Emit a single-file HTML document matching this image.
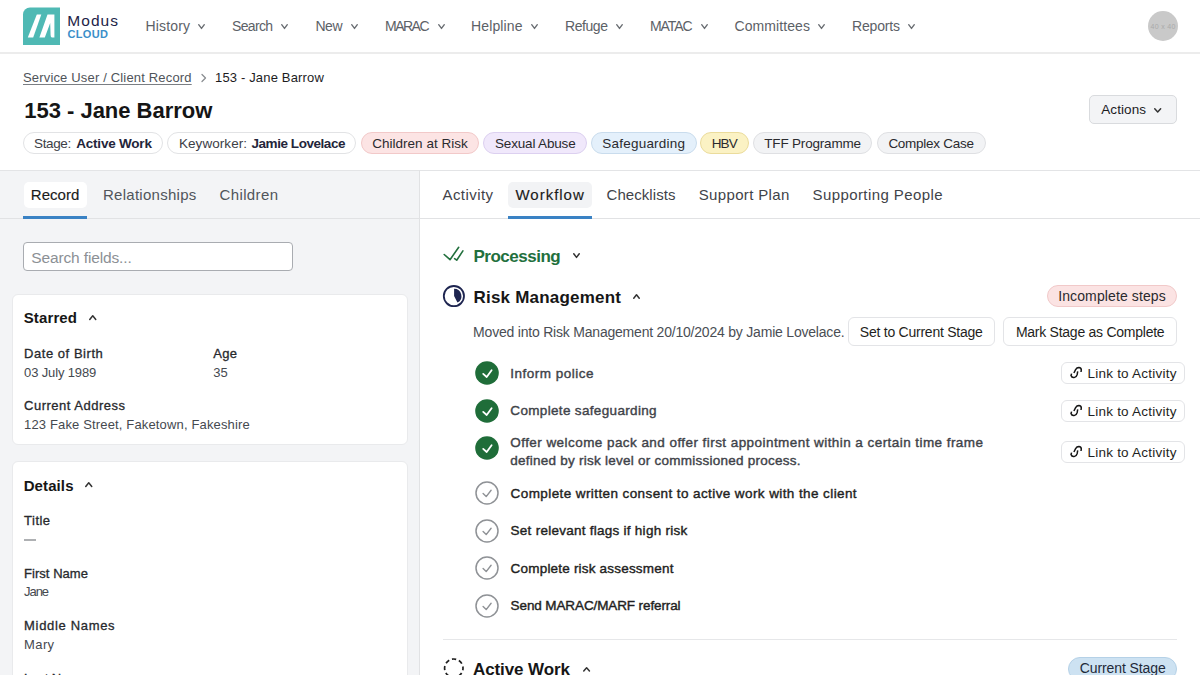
<!DOCTYPE html>
<html><head><meta charset="utf-8"><style>
html,body{margin:0;padding:0;width:1200px;height:675px;overflow:hidden;background:#fff;font-family:"Liberation Sans", sans-serif;}
#root{position:relative;width:1200px;height:675px;overflow:hidden;}
</style></head><body><div id="root">
<div style="position:absolute;left:0px;top:52px;width:1200px;height:1.5px;box-sizing:border-box;background:#ececec"></div>
<svg style="position:absolute;left:0;top:0" width="70" height="50">
<path d="M30 7.5 H60 V45 H23 V14.5 A7 7 0 0 1 30 7.5 Z" fill="#4fb9b4"/>
<path d="M36.8 14.6 H41.3 L33.2 37.5 H27.8 Z" fill="#fff"/>
<path d="M47.5 14.6 H54.4 V37.5 H51.8 Q50.6 37.2 50.6 35 L50.2 23 L44.8 37.5 H39.4 Z" fill="#fff"/>
</svg>
<div style="position:absolute;left:1148px;top:11px;width:30px;height:30px;box-sizing:border-box;background:#c9c9c9;border-radius:50%"></div>
<div style="position:absolute;left:1089.2px;top:94.6px;width:88px;height:29.8px;box-sizing:border-box;background:#f3f4f6;border:1px solid #d9dbde;border-radius:5px"></div>
<div style="position:absolute;left:22.75px;top:132.4px;width:139.75px;height:22px;box-sizing:border-box;background:#fff;border:1px solid #e2e3e5;border-radius:11px"></div>
<div style="position:absolute;left:167.4px;top:132.4px;width:188.99999999999997px;height:22px;box-sizing:border-box;background:#fff;border:1px solid #e2e3e5;border-radius:11px"></div>
<div style="position:absolute;left:361px;top:132.4px;width:118px;height:22px;box-sizing:border-box;background:#fce4e4;border:1px solid #f2c9c9;border-radius:11px"></div>
<div style="position:absolute;left:483.3px;top:132.4px;width:103.40000000000003px;height:22px;box-sizing:border-box;background:#f0e8fb;border:1px solid #dcd0f0;border-radius:11px"></div>
<div style="position:absolute;left:591px;top:132.4px;width:105.70000000000005px;height:22px;box-sizing:border-box;background:#e4f0fb;border:1px solid #c9dced;border-radius:11px"></div>
<div style="position:absolute;left:700px;top:132.4px;width:49px;height:22px;box-sizing:border-box;background:#fbf2c4;border:1px solid #ebdc9c;border-radius:11px"></div>
<div style="position:absolute;left:753.4px;top:132.4px;width:118.80000000000007px;height:22px;box-sizing:border-box;background:#f2f3f5;border:1px solid #dfe0e3;border-radius:11px"></div>
<div style="position:absolute;left:877px;top:132.4px;width:109px;height:22px;box-sizing:border-box;background:#f2f3f5;border:1px solid #dfe0e3;border-radius:11px"></div>
<div style="position:absolute;left:0px;top:170px;width:1200px;height:1px;box-sizing:border-box;background:#e3e4e6"></div>
<div style="position:absolute;left:0px;top:171px;width:419px;height:504px;box-sizing:border-box;background:#f3f4f6"></div>
<div style="position:absolute;left:419px;top:170px;width:1px;height:505px;box-sizing:border-box;background:#e1e2e4"></div>
<div style="position:absolute;left:0px;top:218px;width:1200px;height:1.2px;box-sizing:border-box;background:#e1e2e4"></div>
<div style="position:absolute;left:23.75px;top:182.2px;width:63.25px;height:25.4px;box-sizing:border-box;background:#fff;border-radius:5px"></div>
<div style="position:absolute;left:22.7px;top:215.5px;width:64.3px;height:3px;box-sizing:border-box;background:#3a82c4"></div>
<div style="position:absolute;left:508px;top:182.2px;width:84px;height:25.4px;box-sizing:border-box;background:#f2f3f5;border-radius:5px"></div>
<div style="position:absolute;left:508px;top:215.5px;width:84px;height:3px;box-sizing:border-box;background:#3a82c4"></div>
<div style="position:absolute;left:22.5px;top:242px;width:270px;height:29.25px;box-sizing:border-box;background:#fff;border:1px solid #a9acb1;border-radius:4px"></div>
<div style="position:absolute;left:11.5px;top:294px;width:396px;height:151px;box-sizing:border-box;background:#fff;border:1px solid #e9eaec;border-radius:6px"></div>
<div style="position:absolute;left:11.5px;top:461px;width:396px;height:240px;box-sizing:border-box;background:#fff;border:1px solid #e9eaec;border-radius:6px"></div>
<div style="position:absolute;left:23.7px;top:539px;width:12.5px;height:1.5px;box-sizing:border-box;background:#aeb0b3"></div>
<div style="position:absolute;left:1046.5px;top:285.25px;width:130.5px;height:21.85px;box-sizing:border-box;background:#fbe3e3;border:1px solid #f1c9c9;border-radius:11px"></div>
<div style="position:absolute;left:847.9px;top:317.3px;width:146.7px;height:28.9px;box-sizing:border-box;background:#fff;border:1px solid #e3e4e7;border-radius:6px"></div>
<div style="position:absolute;left:1003.3px;top:317.3px;width:173.6px;height:28.9px;box-sizing:border-box;background:#fff;border:1px solid #e3e4e7;border-radius:6px"></div>
<div style="position:absolute;left:1060.6px;top:362.2px;width:124px;height:22.1px;box-sizing:border-box;background:#fff;border:1px solid #e3e4e7;border-radius:6px"></div>
<div style="position:absolute;left:1060.6px;top:399.6px;width:124px;height:22.1px;box-sizing:border-box;background:#fff;border:1px solid #e3e4e7;border-radius:6px"></div>
<div style="position:absolute;left:1060.6px;top:440.5px;width:124px;height:22.1px;box-sizing:border-box;background:#fff;border:1px solid #e3e4e7;border-radius:6px"></div>
<div style="position:absolute;left:442.5px;top:639.2px;width:734.7px;height:1px;box-sizing:border-box;background:#e6e7e9"></div>
<div style="position:absolute;left:1068px;top:656.8px;width:109.2px;height:24px;box-sizing:border-box;background:#cde2f2;border:1px solid #b5d1e7;border-radius:12px"></div>
<div style="position:absolute;left:67.30px;top:10.60px;white-space:nowrap;font-size:15.5px;font-weight:400;line-height:20px;color:#1d2347;letter-spacing:1.042px;">Modus</div>
<div style="position:absolute;left:67.60px;top:24.40px;white-space:nowrap;font-size:11px;font-weight:700;line-height:20px;color:#3b8fc9;letter-spacing:0.298px;">CLOUD</div>
<div style="position:absolute;left:145.50px;top:15.60px;white-space:nowrap;font-size:14px;font-weight:400;line-height:20px;color:#5c6167;letter-spacing:0.156px;">History</div>
<div style="position:absolute;left:232.00px;top:15.60px;white-space:nowrap;font-size:14px;font-weight:400;line-height:20px;color:#5c6167;letter-spacing:-0.672px;">Search</div>
<div style="position:absolute;left:315.50px;top:15.60px;white-space:nowrap;font-size:14px;font-weight:400;line-height:20px;color:#5c6167;letter-spacing:-0.508px;">New</div>
<div style="position:absolute;left:385.00px;top:15.60px;white-space:nowrap;font-size:14px;font-weight:400;line-height:20px;color:#5c6167;letter-spacing:-1.516px;">MARAC</div>
<div style="position:absolute;left:471.00px;top:15.60px;white-space:nowrap;font-size:14px;font-weight:400;line-height:20px;color:#5c6167;letter-spacing:0.129px;">Helpline</div>
<div style="position:absolute;left:565.00px;top:15.60px;white-space:nowrap;font-size:14px;font-weight:400;line-height:20px;color:#5c6167;letter-spacing:-0.431px;">Refuge</div>
<div style="position:absolute;left:650.00px;top:15.60px;white-space:nowrap;font-size:14px;font-weight:400;line-height:20px;color:#5c6167;letter-spacing:-1.105px;">MATAC</div>
<div style="position:absolute;left:734.50px;top:15.60px;white-space:nowrap;font-size:14px;font-weight:400;line-height:20px;color:#5c6167;letter-spacing:0.090px;">Committees</div>
<div style="position:absolute;left:852.00px;top:15.60px;white-space:nowrap;font-size:14px;font-weight:400;line-height:20px;color:#5c6167;letter-spacing:-0.172px;">Reports</div>
<div style="position:absolute;left:1150.50px;top:16.50px;white-space:nowrap;font-size:7px;font-weight:400;line-height:20px;color:#a9a9a9;letter-spacing:0.339px;">40 x 40</div>
<div style="position:absolute;left:23.00px;top:67.70px;white-space:nowrap;font-size:13px;font-weight:400;line-height:20px;color:#4f545a;letter-spacing:0.167px;text-decoration:underline;text-underline-offset:2px;text-decoration-color:#7a7e83">Service User / Client Record</div>
<div style="position:absolute;left:215.00px;top:67.70px;white-space:nowrap;font-size:13px;font-weight:400;line-height:20px;color:#1c1c1e;letter-spacing:0.160px;">153 - Jane Barrow</div>
<div style="position:absolute;left:24.30px;top:101.00px;white-space:nowrap;font-size:22px;font-weight:700;line-height:20px;color:#151515;letter-spacing:-0.020px;">153 - Jane Barrow</div>
<div style="position:absolute;left:1101.30px;top:100.30px;white-space:nowrap;font-size:13.5px;font-weight:400;line-height:20px;color:#1c1c1e;letter-spacing:0.070px;">Actions</div>
<div style="position:absolute;left:34.00px;top:134.00px;white-space:nowrap;font-size:13.5px;font-weight:400;line-height:20px;color:#3c4046;letter-spacing:-0.356px;">Stage:</div>
<div style="position:absolute;left:76.25px;top:134.00px;white-space:nowrap;font-size:13.5px;font-weight:700;line-height:20px;color:#23253a;letter-spacing:-0.213px;">Active Work</div>
<div style="position:absolute;left:179.00px;top:134.00px;white-space:nowrap;font-size:13.5px;font-weight:400;line-height:20px;color:#3c4046;letter-spacing:0.052px;">Keyworker:</div>
<div style="position:absolute;left:251.50px;top:134.00px;white-space:nowrap;font-size:13.5px;font-weight:700;line-height:20px;color:#23253a;letter-spacing:-0.448px;">Jamie Lovelace</div>
<div style="position:absolute;left:372.30px;top:134.00px;white-space:nowrap;font-size:13.5px;font-weight:400;line-height:20px;color:#2a2a2e;letter-spacing:0.007px;">Children at Risk</div>
<div style="position:absolute;left:495.00px;top:134.00px;white-space:nowrap;font-size:13.5px;font-weight:400;line-height:20px;color:#2a2a2e;letter-spacing:-0.169px;">Sexual Abuse</div>
<div style="position:absolute;left:602.30px;top:134.00px;white-space:nowrap;font-size:13.5px;font-weight:400;line-height:20px;color:#2a2a2e;letter-spacing:0.216px;">Safeguarding</div>
<div style="position:absolute;left:711.70px;top:134.00px;white-space:nowrap;font-size:13.5px;font-weight:400;line-height:20px;color:#2a2a2e;letter-spacing:-0.883px;">HBV</div>
<div style="position:absolute;left:764.30px;top:134.00px;white-space:nowrap;font-size:13.5px;font-weight:400;line-height:20px;color:#2a2a2e;letter-spacing:-0.193px;">TFF Programme</div>
<div style="position:absolute;left:888.40px;top:134.00px;white-space:nowrap;font-size:13.5px;font-weight:400;line-height:20px;color:#2a2a2e;letter-spacing:-0.268px;">Complex Case</div>
<div style="position:absolute;left:30.80px;top:185.20px;white-space:nowrap;font-size:15px;font-weight:400;line-height:20px;color:#1b1b1b;letter-spacing:0.028px;-webkit-text-stroke:0.15px #1b1b1b">Record</div>
<div style="position:absolute;left:103.00px;top:185.20px;white-space:nowrap;font-size:15px;font-weight:400;line-height:20px;color:#50555b;letter-spacing:0.266px;">Relationships</div>
<div style="position:absolute;left:219.50px;top:185.20px;white-space:nowrap;font-size:15px;font-weight:400;line-height:20px;color:#50555b;letter-spacing:0.375px;">Children</div>
<div style="position:absolute;left:442.50px;top:185.20px;white-space:nowrap;font-size:15px;font-weight:400;line-height:20px;color:#3f4349;letter-spacing:0.426px;">Activity</div>
<div style="position:absolute;left:515.50px;top:185.20px;white-space:nowrap;font-size:15px;font-weight:400;line-height:20px;color:#1b1b1b;letter-spacing:0.978px;-webkit-text-stroke:0.15px #1b1b1b">Workflow</div>
<div style="position:absolute;left:606.50px;top:185.20px;white-space:nowrap;font-size:15px;font-weight:400;line-height:20px;color:#3f4349;letter-spacing:0.071px;">Checklists</div>
<div style="position:absolute;left:698.75px;top:185.20px;white-space:nowrap;font-size:15px;font-weight:400;line-height:20px;color:#3f4349;letter-spacing:0.342px;">Support Plan</div>
<div style="position:absolute;left:812.50px;top:185.20px;white-space:nowrap;font-size:15px;font-weight:400;line-height:20px;color:#3f4349;letter-spacing:0.410px;">Supporting People</div>
<div style="position:absolute;left:31.25px;top:247.50px;white-space:nowrap;font-size:15.5px;font-weight:400;line-height:20px;color:#8c9095;letter-spacing:-0.135px;">Search fields...</div>
<div style="position:absolute;left:23.75px;top:308.25px;white-space:nowrap;font-size:15px;font-weight:700;line-height:20px;color:#161616;letter-spacing:0.120px;">Starred</div>
<div style="position:absolute;left:24.10px;top:344.20px;white-space:nowrap;font-size:13px;font-weight:400;line-height:20px;color:#27292d;letter-spacing:0.536px;-webkit-text-stroke:0.3px #27292d">Date of Birth</div>
<div style="position:absolute;left:24.10px;top:362.60px;white-space:nowrap;font-size:13px;font-weight:400;line-height:20px;color:#45494f;letter-spacing:-0.139px;">03 July 1989</div>
<div style="position:absolute;left:213.30px;top:344.20px;white-space:nowrap;font-size:13px;font-weight:400;line-height:20px;color:#27292d;letter-spacing:0.330px;-webkit-text-stroke:0.3px #27292d">Age</div>
<div style="position:absolute;left:213.30px;top:362.60px;white-space:nowrap;font-size:13px;font-weight:400;line-height:20px;color:#45494f;letter-spacing:0.031px;">35</div>
<div style="position:absolute;left:24.10px;top:396.40px;white-space:nowrap;font-size:13px;font-weight:400;line-height:20px;color:#27292d;letter-spacing:0.497px;-webkit-text-stroke:0.3px #27292d">Current Address</div>
<div style="position:absolute;left:24.10px;top:415.30px;white-space:nowrap;font-size:13px;font-weight:400;line-height:20px;color:#45494f;letter-spacing:0.149px;">123 Fake Street, Faketown, Fakeshire</div>
<div style="position:absolute;left:23.70px;top:475.50px;white-space:nowrap;font-size:15px;font-weight:700;line-height:20px;color:#161616;letter-spacing:0.099px;">Details</div>
<div style="position:absolute;left:24.10px;top:511.00px;white-space:nowrap;font-size:13px;font-weight:400;line-height:20px;color:#27292d;letter-spacing:0.480px;-webkit-text-stroke:0.3px #27292d">Title</div>
<div style="position:absolute;left:24.10px;top:563.60px;white-space:nowrap;font-size:13px;font-weight:400;line-height:20px;color:#27292d;letter-spacing:0.026px;-webkit-text-stroke:0.3px #27292d">First Name</div>
<div style="position:absolute;left:24.10px;top:581.70px;white-space:nowrap;font-size:13px;font-weight:400;line-height:20px;color:#45494f;letter-spacing:-1.068px;">Jane</div>
<div style="position:absolute;left:24.10px;top:616.00px;white-space:nowrap;font-size:13px;font-weight:400;line-height:20px;color:#27292d;letter-spacing:0.673px;-webkit-text-stroke:0.3px #27292d">Middle Names</div>
<div style="position:absolute;left:24.10px;top:634.60px;white-space:nowrap;font-size:13px;font-weight:400;line-height:20px;color:#45494f;letter-spacing:0.370px;">Mary</div>
<div style="position:absolute;left:24.10px;top:668.50px;white-space:nowrap;font-size:13px;font-weight:400;line-height:20px;color:#27292d;letter-spacing:-0.109px;-webkit-text-stroke:0.3px #27292d">Last Name</div>
<div style="position:absolute;left:473.50px;top:246.60px;white-space:nowrap;font-size:17px;font-weight:700;line-height:20px;color:#22703d;letter-spacing:-0.495px;">Processing</div>
<div style="position:absolute;left:473.50px;top:287.90px;white-space:nowrap;font-size:17px;font-weight:700;line-height:20px;color:#161616;letter-spacing:0.204px;">Risk Management</div>
<div style="position:absolute;left:1058.20px;top:286.00px;white-space:nowrap;font-size:14px;font-weight:400;line-height:20px;color:#2a2a2e;letter-spacing:0.117px;">Incomplete steps</div>
<div style="position:absolute;left:473.10px;top:321.65px;white-space:nowrap;font-size:14px;font-weight:400;line-height:20px;color:#4a4e54;letter-spacing:-0.207px;">Moved into Risk Management 20/10/2024 by Jamie Lovelace.</div>
<div style="position:absolute;left:859.80px;top:321.90px;white-space:nowrap;font-size:14px;font-weight:400;line-height:20px;color:#1f1f22;letter-spacing:-0.239px;">Set to Current Stage</div>
<div style="position:absolute;left:1015.90px;top:321.90px;white-space:nowrap;font-size:14px;font-weight:400;line-height:20px;color:#1f1f22;letter-spacing:-0.256px;">Mark Stage as Complete</div>
<div style="position:absolute;left:510.30px;top:363.75px;white-space:nowrap;font-size:13.5px;font-weight:400;line-height:20px;color:#3f4349;letter-spacing:0.484px;-webkit-text-stroke:0.4px #3f4349">Inform police</div>
<div style="position:absolute;left:510.30px;top:401.40px;white-space:nowrap;font-size:13.5px;font-weight:400;line-height:20px;color:#3f4349;letter-spacing:0.335px;-webkit-text-stroke:0.4px #3f4349">Complete safeguarding</div>
<div style="position:absolute;left:510.30px;top:433.10px;white-space:nowrap;font-size:13.5px;font-weight:400;line-height:20px;color:#3f4349;letter-spacing:0.438px;-webkit-text-stroke:0.4px #3f4349">Offer welcome pack and offer first appointment within a certain time frame</div>
<div style="position:absolute;left:510.30px;top:451.20px;white-space:nowrap;font-size:13.5px;font-weight:400;line-height:20px;color:#3f4349;letter-spacing:0.246px;-webkit-text-stroke:0.4px #3f4349">defined by risk level or commissioned process.</div>
<div style="position:absolute;left:510.60px;top:483.90px;white-space:nowrap;font-size:13.5px;font-weight:400;line-height:20px;color:#1f1f22;letter-spacing:0.405px;-webkit-text-stroke:0.4px #1f1f22">Complete written consent to active work with the client</div>
<div style="position:absolute;left:510.60px;top:521.40px;white-space:nowrap;font-size:13.5px;font-weight:400;line-height:20px;color:#1f1f22;letter-spacing:0.259px;-webkit-text-stroke:0.4px #1f1f22">Set relevant flags if high risk</div>
<div style="position:absolute;left:510.60px;top:558.80px;white-space:nowrap;font-size:13.5px;font-weight:400;line-height:20px;color:#1f1f22;letter-spacing:0.195px;-webkit-text-stroke:0.4px #1f1f22">Complete risk assessment</div>
<div style="position:absolute;left:510.60px;top:596.10px;white-space:nowrap;font-size:13.5px;font-weight:400;line-height:20px;color:#1f1f22;letter-spacing:-0.111px;-webkit-text-stroke:0.4px #1f1f22">Send MARAC/MARF referral</div>
<div style="position:absolute;left:1087.50px;top:364.00px;white-space:nowrap;font-size:13.5px;font-weight:400;line-height:20px;color:#1f1f22;letter-spacing:0.224px;">Link to Activity</div>
<div style="position:absolute;left:1087.50px;top:401.60px;white-space:nowrap;font-size:13.5px;font-weight:400;line-height:20px;color:#1f1f22;letter-spacing:0.224px;">Link to Activity</div>
<div style="position:absolute;left:1087.50px;top:442.60px;white-space:nowrap;font-size:13.5px;font-weight:400;line-height:20px;color:#1f1f22;letter-spacing:0.224px;">Link to Activity</div>
<div style="position:absolute;left:473.00px;top:660.30px;white-space:nowrap;font-size:17px;font-weight:700;line-height:20px;color:#161616;letter-spacing:-0.095px;">Active Work</div>
<div style="position:absolute;left:1079.70px;top:658.40px;white-space:nowrap;font-size:14px;font-weight:400;line-height:20px;color:#1f2a3a;letter-spacing:-0.089px;">Current Stage</div>
<svg style="position:absolute;left:198px;top:24px;overflow:visible" width="7" height="5.4"><path d="M0.7 0.7 L3.5 4.4 L6.3 0.7" fill="none" stroke="#6a6e73" stroke-width="1.4" stroke-linecap="round" stroke-linejoin="round"/></svg>
<svg style="position:absolute;left:281px;top:24px;overflow:visible" width="7" height="5.4"><path d="M0.7 0.7 L3.5 4.4 L6.3 0.7" fill="none" stroke="#6a6e73" stroke-width="1.4" stroke-linecap="round" stroke-linejoin="round"/></svg>
<svg style="position:absolute;left:350.5px;top:24px;overflow:visible" width="7" height="5.4"><path d="M0.7 0.7 L3.5 4.4 L6.3 0.7" fill="none" stroke="#6a6e73" stroke-width="1.4" stroke-linecap="round" stroke-linejoin="round"/></svg>
<svg style="position:absolute;left:437.5px;top:24px;overflow:visible" width="7" height="5.4"><path d="M0.7 0.7 L3.5 4.4 L6.3 0.7" fill="none" stroke="#6a6e73" stroke-width="1.4" stroke-linecap="round" stroke-linejoin="round"/></svg>
<svg style="position:absolute;left:530.5px;top:24px;overflow:visible" width="7" height="5.4"><path d="M0.7 0.7 L3.5 4.4 L6.3 0.7" fill="none" stroke="#6a6e73" stroke-width="1.4" stroke-linecap="round" stroke-linejoin="round"/></svg>
<svg style="position:absolute;left:616px;top:24px;overflow:visible" width="7" height="5.4"><path d="M0.7 0.7 L3.5 4.4 L6.3 0.7" fill="none" stroke="#6a6e73" stroke-width="1.4" stroke-linecap="round" stroke-linejoin="round"/></svg>
<svg style="position:absolute;left:700.5px;top:24px;overflow:visible" width="7" height="5.4"><path d="M0.7 0.7 L3.5 4.4 L6.3 0.7" fill="none" stroke="#6a6e73" stroke-width="1.4" stroke-linecap="round" stroke-linejoin="round"/></svg>
<svg style="position:absolute;left:818px;top:24px;overflow:visible" width="7" height="5.4"><path d="M0.7 0.7 L3.5 4.4 L6.3 0.7" fill="none" stroke="#6a6e73" stroke-width="1.4" stroke-linecap="round" stroke-linejoin="round"/></svg>
<svg style="position:absolute;left:908px;top:24px;overflow:visible" width="7" height="5.4"><path d="M0.7 0.7 L3.5 4.4 L6.3 0.7" fill="none" stroke="#6a6e73" stroke-width="1.4" stroke-linecap="round" stroke-linejoin="round"/></svg>
<svg style="position:absolute;left:200px;top:73px" width="8" height="11"><path d="M2 1.5 L5.5 5 L2 8.5" fill="none" stroke="#8a8d91" stroke-width="1.3" stroke-linecap="round" stroke-linejoin="round"/></svg>
<svg style="position:absolute;left:1154.2px;top:108px;overflow:visible" width="7.4" height="5"><path d="M0.75 0.75 L3.7 4.0 L6.65 0.75" fill="none" stroke="#333" stroke-width="1.5" stroke-linecap="round" stroke-linejoin="round"/></svg>
<svg style="position:absolute;left:88.7px;top:314.7px;overflow:visible" width="7.5" height="5.5"><path d="M0.75 4.5 L3.75 0.75 L6.75 4.5" fill="none" stroke="#333" stroke-width="1.5" stroke-linecap="round" stroke-linejoin="round"/></svg>
<svg style="position:absolute;left:85px;top:482.3px;overflow:visible" width="7.5" height="5.5"><path d="M0.75 4.5 L3.75 0.75 L6.75 4.5" fill="none" stroke="#333" stroke-width="1.5" stroke-linecap="round" stroke-linejoin="round"/></svg>
<svg style="position:absolute;left:440px;top:243px" width="26" height="20">
<path d="M4.2 11.5 L10 16.7 L18.7 4.3" fill="none" stroke="#22703d" stroke-width="1.6" stroke-linecap="round" stroke-linejoin="round"/>
<path d="M14.6 15.7 L16.7 17.2 L22.9 7.9" fill="none" stroke="#22703d" stroke-width="1.6" stroke-linecap="round" stroke-linejoin="round"/>
</svg>
<svg style="position:absolute;left:573.3px;top:253px;overflow:visible" width="7" height="5.4"><path d="M0.75 0.75 L3.5 4.4 L6.25 0.75" fill="none" stroke="#333" stroke-width="1.5" stroke-linecap="round" stroke-linejoin="round"/></svg>
<svg style="position:absolute;left:440px;top:282px" width="28" height="28">
<circle cx="13.9" cy="14.1" r="10.1" fill="none" stroke="#1e2550" stroke-width="1.8"/>
<path d="M14.1 14.1 L14.1 6.8 A7.3 7.3 0 0 1 17.45 20.6 Z" fill="#1e2550"/>
</svg>
<svg style="position:absolute;left:632.75px;top:293.8px;overflow:visible" width="7" height="5.2"><path d="M0.75 4.2 L3.5 0.75 L6.25 4.2" fill="none" stroke="#333" stroke-width="1.5" stroke-linecap="round" stroke-linejoin="round"/></svg>
<svg style="position:absolute;left:474px;top:359.8px" width="26" height="26">
<circle cx="13" cy="13" r="11.8" fill="#1f6d39"/>
<path d="M9.2 13.9 L12.7 17 L17.6 10.2" fill="none" stroke="#fff" stroke-width="1.8" stroke-linecap="round" stroke-linejoin="round"/></svg>
<svg style="position:absolute;left:474px;top:397.6px" width="26" height="26">
<circle cx="13" cy="13" r="11.8" fill="#1f6d39"/>
<path d="M9.2 13.9 L12.7 17 L17.6 10.2" fill="none" stroke="#fff" stroke-width="1.8" stroke-linecap="round" stroke-linejoin="round"/></svg>
<svg style="position:absolute;left:474px;top:434.9px" width="26" height="26">
<circle cx="13" cy="13" r="11.8" fill="#1f6d39"/>
<path d="M9.2 13.9 L12.7 17 L17.6 10.2" fill="none" stroke="#fff" stroke-width="1.8" stroke-linecap="round" stroke-linejoin="round"/></svg>
<svg style="position:absolute;left:474.2px;top:479.8px" width="26" height="26">
<circle cx="13" cy="13" r="11" fill="#fff" stroke="#8f9296" stroke-width="1.5"/>
<path d="M9.1 13.6 L12.2 16.6 L17.1 10.2" fill="none" stroke="#8f9296" stroke-width="1.4" stroke-linecap="round" stroke-linejoin="round"/></svg>
<svg style="position:absolute;left:474.2px;top:517.5px" width="26" height="26">
<circle cx="13" cy="13" r="11" fill="#fff" stroke="#8f9296" stroke-width="1.5"/>
<path d="M9.1 13.6 L12.2 16.6 L17.1 10.2" fill="none" stroke="#8f9296" stroke-width="1.4" stroke-linecap="round" stroke-linejoin="round"/></svg>
<svg style="position:absolute;left:474.2px;top:554.8px" width="26" height="26">
<circle cx="13" cy="13" r="11" fill="#fff" stroke="#8f9296" stroke-width="1.5"/>
<path d="M9.1 13.6 L12.2 16.6 L17.1 10.2" fill="none" stroke="#8f9296" stroke-width="1.4" stroke-linecap="round" stroke-linejoin="round"/></svg>
<svg style="position:absolute;left:474.2px;top:592.5px" width="26" height="26">
<circle cx="13" cy="13" r="11" fill="#fff" stroke="#8f9296" stroke-width="1.5"/>
<path d="M9.1 13.6 L12.2 16.6 L17.1 10.2" fill="none" stroke="#8f9296" stroke-width="1.4" stroke-linecap="round" stroke-linejoin="round"/></svg>
<svg style="position:absolute;left:1069px;top:365px" width="15" height="16">
<g fill="none" stroke="#161616" stroke-width="1.5" stroke-linecap="butt">
<path d="M4.9 8 L6.6 4.6 Q7.8 2.6 9.8 2.6 Q12.4 2.9 12.3 5 L12.0 7"/>
<path d="M8.7 6.4 L8.2 9.4 Q7.4 11.8 5.6 12.4 Q2.9 13.2 2.0 10.6 L2.6 8.6"/>
</g></svg>
<svg style="position:absolute;left:1069px;top:402.6px" width="15" height="16">
<g fill="none" stroke="#161616" stroke-width="1.5" stroke-linecap="butt">
<path d="M4.9 8 L6.6 4.6 Q7.8 2.6 9.8 2.6 Q12.4 2.9 12.3 5 L12.0 7"/>
<path d="M8.7 6.4 L8.2 9.4 Q7.4 11.8 5.6 12.4 Q2.9 13.2 2.0 10.6 L2.6 8.6"/>
</g></svg>
<svg style="position:absolute;left:1069px;top:443.6px" width="15" height="16">
<g fill="none" stroke="#161616" stroke-width="1.5" stroke-linecap="butt">
<path d="M4.9 8 L6.6 4.6 Q7.8 2.6 9.8 2.6 Q12.4 2.9 12.3 5 L12.0 7"/>
<path d="M8.7 6.4 L8.2 9.4 Q7.4 11.8 5.6 12.4 Q2.9 13.2 2.0 10.6 L2.6 8.6"/>
</g></svg>
<svg style="position:absolute;left:441px;top:656px" width="26" height="26">
<circle cx="12.8" cy="12.2" r="9.2" fill="none" stroke="#1f1f1f" stroke-width="1.7" stroke-dasharray="4.3 2.925" stroke-dashoffset="2.15"/></svg>
<svg style="position:absolute;left:582.5px;top:666.5px;overflow:visible" width="7.2" height="5"><path d="M0.75 4.0 L3.6 0.75 L6.45 4" fill="none" stroke="#333" stroke-width="1.5" stroke-linecap="round" stroke-linejoin="round"/></svg>
</div></body></html>
